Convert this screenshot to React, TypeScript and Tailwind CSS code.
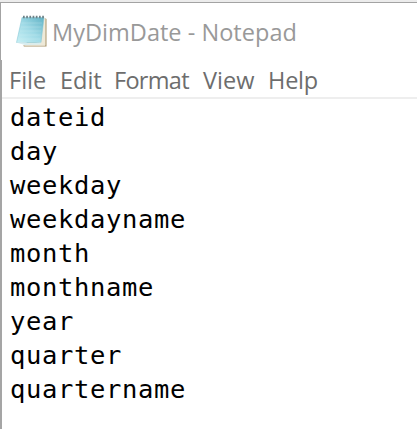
const lines = ["dateid", "day", "weekday", "weekdayname", "month", "monthname", "year", "quarter", "quartername"];

function NotepadIcon() {
  return (
    <svg width="34" height="36" viewBox="0 0 34 36" className="shrink-0">
      <defs>
        <linearGradient id="sheet" x1="0" y1="1" x2="1" y2="0">
          <stop offset="0" stopColor="#c8f0f5" />
          <stop offset="0.5" stopColor="#9fdae6" />
          <stop offset="1" stopColor="#62b3c6" />
        </linearGradient>
      </defs>
      <path d="M9 31.5H31V4L32.5 5V32.5H10Z" fill="#a8946b" />
      <path d="M28 4H31.5V31.5H11Z" fill="#eee9d8" />
      <path d="M8 3.5H30L27 28.5H2.5Z" fill="url(#sheet)" stroke="#7cc3d2" strokeWidth="0.5" />
      <path d="M7 9H28M6.5 13H27.5M6 17H27M5 21H26.5M4.5 25H26" stroke="#dcf5f7" strokeWidth="0.7" opacity="0.35" />
      <path d="M2 28.5Q11 27.5 15 29.5L27 28.5L26 30.5L11 31Z" fill="#d7edf0" />
      <path d="M9 3H30" stroke="#6c8187" strokeWidth="2.4" strokeDasharray="1.7 1.5" />
    </svg>
  );
}

export default function App() {
  return (
    <div className="flex h-[429px] w-[417px] flex-col overflow-hidden bg-white">
      <div className="h-[2px] shrink-0 bg-[#ececec]" />
      <header className="flex h-[58px] shrink-0 border-t border-l border-[#a3a3a3] pt-[11px] pl-[13px] font-['Open_Sans',sans-serif] text-[23.5px] leading-[36px] text-[#999999]">
        <NotepadIcon />
        <h1 className="ml-[4px] whitespace-nowrap tracking-[0.03px]">MyDimDate - Notepad</h1>
      </header>
      <div className="flex min-h-0 flex-1 flex-col border-l-2 border-[#a5a5a5]">
        <nav className="grid h-[39px] shrink-0 grid-cols-[51px_54px_89px_65px_60px] border-b-2 border-[#eeeeee] pl-[7px] font-['Open_Sans',sans-serif] text-[23.5px] leading-[41px] text-[#6d6d6d]">
          <span>File</span>
          <span>Edit</span>
          <span className="tracking-[-0.7px]">Format</span>
          <span>View</span>
          <span className="tracking-[-0.2px]">Help</span>
        </nav>
        <main className="pt-px pl-[8px] font-['DejaVu_Sans_Mono',monospace] text-[25.5px] leading-[34px] tracking-[0.65px] text-black">
          {lines.map((line) => (
            <div key={line}>{line}</div>
          ))}
        </main>
      </div>
    </div>
  );
}
